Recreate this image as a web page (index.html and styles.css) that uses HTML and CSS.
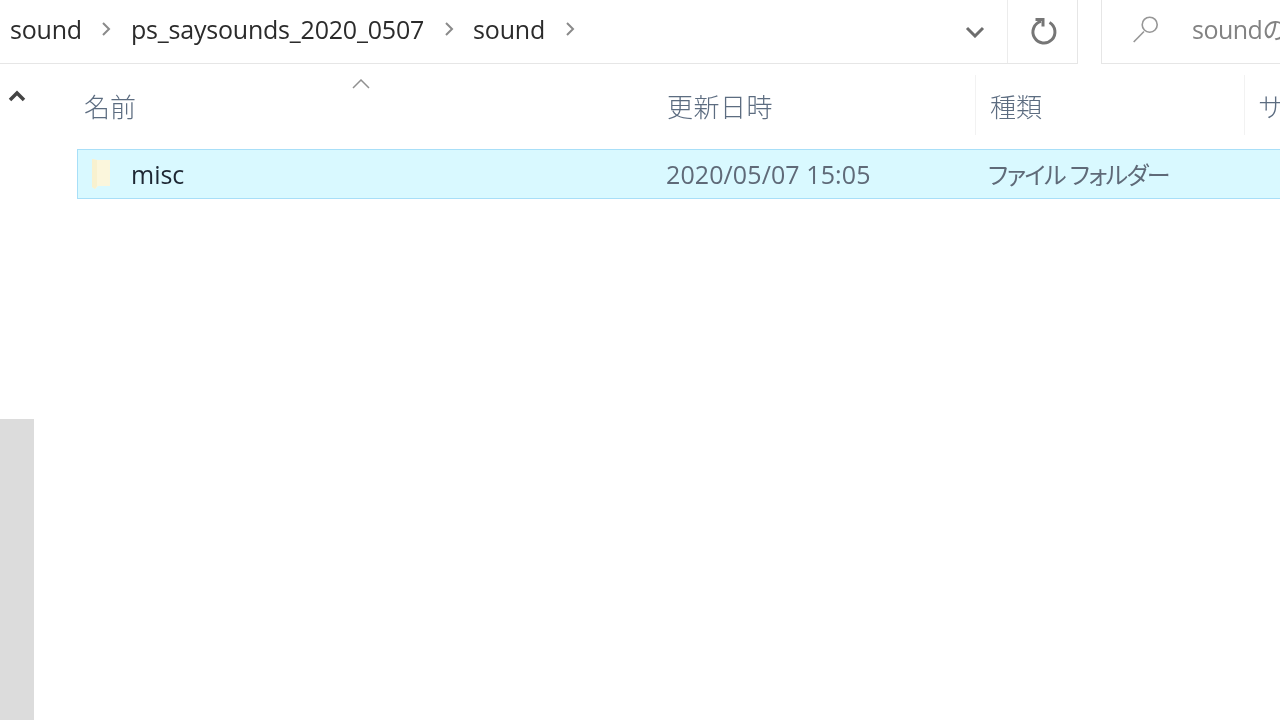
FILE: index.html
```html
<!DOCTYPE html>
<html lang="ja">
<head>
    <meta charset="UTF-8">
    <meta name="viewport" content="width=device-width, initial-scale=1.0">
    <title>sound</title>
    <link rel="stylesheet" href="styles.css">
</head>
<body>
    <div class="toolbar">
        <div class="address">
            <div class="crumbs">
                <span class="crumb">sound</span>
                <svg class="chevron" viewBox="0 0 10 16"><path d="M2 2l6 6-6 6"/></svg>
                <span class="crumb">ps_saysounds_2020_0507</span>
                <svg class="chevron" viewBox="0 0 10 16"><path d="M2 2l6 6-6 6"/></svg>
                <span class="crumb">sound</span>
                <svg class="chevron" viewBox="0 0 10 16"><path d="M2 2l6 6-6 6"/></svg>
            </div>
            <div class="dropdown">
                <svg viewBox="0 0 20 12"><path d="M2 2l8 8 8-8"/></svg>
            </div>
            <div class="refresh">
                <svg viewBox="0 0 28 28"><path d="M11 3.400A11 11 0 1 0 19.500 4.500"/><path d="M5.500 1.500H13V8.500"/></svg>
            </div>
        </div>
        <div class="search">
            <svg viewBox="0 0 30 30"><circle cx="16.700" cy="11.700" r="7.500"/><path d="M11 18.500L.7 29"/></svg>
            <span class="search-text">soundの検索</span>
        </div>
    </div>

    <div class="main">
        <div class="rail">
            <svg class="rail-up" viewBox="0 0 18 12"><path d="M2 10l7-7 7 7"/></svg>
            <div class="thumb"></div>
        </div>
        <div class="list">
            <div class="header">
                <div class="col col-name">
                    名前
                    <svg class="sort" viewBox="0 0 18 10"><path d="M1 9l8-8 8 8"/></svg>
                </div>
                <div class="col col-date">更新日時</div>
                <div class="col col-type">種類</div>
                <div class="col col-size">サイズ</div>
            </div>
            <div class="row">
                <div class="cell cell-name">
                    <svg class="folder" viewBox="0 0 20 30"><path d="M0 0l5 1h13v26H6l-3 3-3-2z" class="back"/><path d="M0 0l5 1v26l-2 3-3-2z" class="front"/></svg>
                    <span>misc</span>
                </div>
                <div class="cell cell-date">2020/05/07 15:05</div>
                <div class="cell cell-type">ファイル フォルダー</div>
            </div>
        </div>
    </div>
</body>
</html>
```

FILE: styles.css
```css
body {
    margin: 0;
    width: 1280px;
    height: 720px;
    overflow: hidden;
    background: white;
    font-family: "Open Sans", "Noto Sans CJK JP", sans-serif;
}
svg {
    display: block;
    fill: none;
    stroke: #808080;
}
.toolbar {
    display: flex;
    height: 64px;
    filter: blur(0.4px);
}
.address {
    display: flex;
    width: 1078px;
    border-bottom: 1px solid #e6e6e6;
    border-right: 1px solid #e6e6e6;
    box-sizing: border-box;
}
.crumbs {
    flex: 1;
    display: flex;
    align-items: center;
    padding: 0 0 5px 10px;
    font-size: 25px;
    letter-spacing: -0.2px;
    color: #2b2b2b;
}
.chevron {
    width: 10px;
    height: 16px;
    margin: 0 19.500px;
    stroke: #8a8a8a;
    stroke-width: 2;
}
.dropdown {
    width: 69px;
    display: flex;
    align-items: center;
    justify-content: center;
    padding-left: 4px;
    box-sizing: border-box;
}
.dropdown svg {
    width: 20px;
    height: 12px;
    stroke: #6d6d6d;
    stroke-width: 3;
}
.refresh {
    width: 70px;
    display: flex;
    align-items: center;
    justify-content: center;
    padding-left: 3px;
    border-left: 1px solid #ececec;
    box-sizing: border-box;
}
.refresh svg {
    width: 28px;
    height: 28px;
    stroke: #767676;
    stroke-width: 3;
}
.search {
    display: flex;
    align-items: center;
    flex: 1;
    margin-left: 23px;
    padding-left: 31px;
    border-left: 1px solid #e6e6e6;
    border-bottom: 1px solid #e6e6e6;
    overflow: hidden;
    white-space: nowrap;
}
.search svg {
    width: 30px;
    height: 30px;
    flex: none;
    stroke: #969696;
    stroke-width: 1.600;
    margin-bottom: 7px;
}
.search-text {
    margin-left: 29px;
    font-size: 25px;
    letter-spacing: -0.5px;
    color: #828282;
    padding-bottom: 7px;
}
.main {
    display: flex;
    height: 656px;
    filter: blur(0.4px);
}
.rail {
    width: 34px;
    display: flex;
    flex-direction: column;
    align-items: center;
}
.rail-up {
    width: 18px;
    height: 12px;
    margin: 26px 1px 0 0;
    stroke: #444;
    stroke-width: 3.500;
}
.thumb {
    width: 34px;
    margin-top: auto;
    height: 301px;
    background: #dcdcdc;
}
.list {
    flex: 1;
    padding: 11px 0 0 43px;
    overflow: hidden;
}
.header {
    display: flex;
    height: 60px;
    margin-bottom: 14px;
    font-size: 26px;
    color: #5c6c80;
    font-weight: 300;
}
.col {
    display: flex;
    align-items: center;
    box-sizing: border-box;
    flex: none;
    padding-top: 2px;
    white-space: nowrap;
}
.col-name {
    width: 584px;
    padding-left: 7px;
    position: relative;
}
.sort {
    position: absolute;
    left: 275px;
    top: 4px;
    width: 18px;
    height: 10px;
    stroke: #909090;
    stroke-width: 1.500;
}
.col-date {
    width: 315px;
    padding-left: 6px;
    letter-spacing: 0.5px;
    border-right: 1px solid #f2f2f2;
}
.col-type {
    width: 269px;
    padding-left: 14px;
    border-right: 1px solid #f2f2f2;
}
.col-size {
    padding-left: 13px;
}
.row {
    display: flex;
    align-items: center;
    width: 1203px;
    height: 50px;
    box-sizing: border-box;
    background: #d9f9ff;
    border: 1px solid #a8dff8;
    border-right: 0;
    font-size: 25px;
}
.cell {
    flex: none;
    white-space: nowrap;
}
.cell-name {
    display: flex;
    align-items: center;
    width: 588px;
    color: #1d2733;
}
.folder {
    width: 20px;
    height: 30px;
    margin: 0 19px 0 14px;
    stroke: none;
}
.folder .back {
    fill: #fbf6dc;
}
.folder .front {
    fill: #f8f1cf;
}
.cell-date {
    width: 322px;
    letter-spacing: 0.1px;
    color: #5f6a78;
}
.cell-type {
    font-size: 24px;
    color: #5f6a78;
    font-feature-settings: "palt";
    letter-spacing: -1.500px;
    padding-bottom: 2px;
}
```
